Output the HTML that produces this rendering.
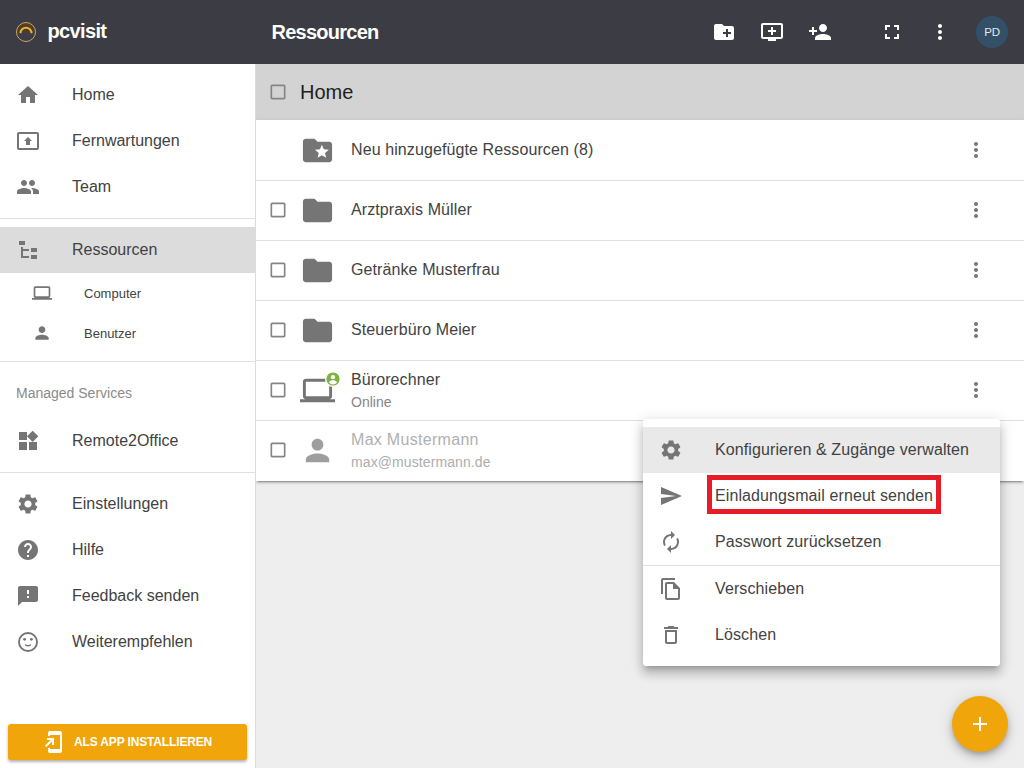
<!DOCTYPE html>
<html lang="de">
<head>
<meta charset="utf-8">
<title>pcvisit – Ressourcen</title>
<style>
*{box-sizing:border-box;margin:0;padding:0}
html,body{width:1024px;height:768px;overflow:hidden;background:#eeeeee;font-family:"Liberation Sans",sans-serif;color:#424242}
.abs{position:absolute}
svg{display:block}
#side{position:absolute;left:0;top:0;width:256px;height:768px;background:#fff;border-right:1px solid #dcdcdc;z-index:2}
#sidehead{position:absolute;left:0;top:0;width:256px;height:64px;background:#3b3c44}
#brand{position:absolute;left:47.500px;top:19px;letter-spacing:-0.65px;font-size:20px;line-height:24px;font-weight:bold;color:#fff;white-space:nowrap}
.nav{position:absolute;left:0;width:255px;height:46px}
.nav svg{position:absolute;left:16px;top:11px;width:24px;height:24px;fill:#757575}
.nav span{position:absolute;left:72px;top:11px;font-size:16px;line-height:24px;color:#424242;white-space:nowrap}
.nav.sel{background:#dcdcdc}
.sub{position:absolute;left:0;width:255px;height:40px}
.sub svg{position:absolute;left:32px;top:10px;width:20px;height:20px;fill:#757575}
.sub span{position:absolute;left:84px;top:11px;font-size:13px;line-height:20px;color:#424242;white-space:nowrap}
.hr{position:absolute;left:0;width:255px;height:1px;background:#e0e0e0}
#ms{position:absolute;left:16px;top:383px;font-size:14px;line-height:20px;color:#8a8a8a;white-space:nowrap}
#install{position:absolute;left:8px;top:724px;width:239px;height:36px;background:#f0a50a;border-radius:3px;box-shadow:0 2px 3px rgba(0,0,0,.3)}
#install svg{position:absolute;left:34px;top:6px;width:24px;height:24px;fill:#fff}
#install span{position:absolute;left:66px;top:9px;letter-spacing:-0.15px;font-size:12px;line-height:18px;font-weight:bold;color:#fff;white-space:nowrap}
#top{position:absolute;left:256px;top:0;width:768px;height:64px;background:#3b3c44}
#title{position:absolute;left:15.500px;top:20px;font-size:20px;letter-spacing:-0.75px;line-height:24px;font-weight:bold;color:#fff;white-space:nowrap}
#top svg{position:absolute;top:20px;width:24px;height:24px;fill:#fff}
#avatar{position:absolute;left:720px;top:16px;width:32px;height:32px;border-radius:50%;background:#345069;color:#e3e9ee;font-size:11.500px;letter-spacing:-0.3px;line-height:33px;text-align:center}
#crumb{position:absolute;left:256px;top:64px;width:768px;height:56px;background:#d3d3d3}
#crumb span{position:absolute;left:44px;top:14px;font-size:20px;line-height:28px;color:#212121}
.cb{position:absolute;left:268px;width:20px;height:20px;fill:#858585}
#list{position:absolute;left:256px;top:120px;width:768px;height:361px;background:#fff;box-shadow:0 3px 1px -2px rgba(0,0,0,.2),0 2px 2px 0 rgba(0,0,0,.14),0 1px 5px 0 rgba(0,0,0,.12)}
.row{position:absolute;left:0;width:768px;height:60px}
.sep{position:absolute;left:0;width:768px;height:1px;background:#e0e0e0}
.row .ic{position:absolute;left:44px;top:13px;width:35px;height:35px;fill:#757575}
.row .t1{position:absolute;left:95px;top:18px;letter-spacing:0.1px;font-size:16px;line-height:24px;color:#424242;white-space:nowrap}
.row .t2{position:absolute;left:95px;top:32px;font-size:14px;line-height:20px;color:#858585;white-space:nowrap}
.row.two .t1{top:8px}
.row .mv{position:absolute;left:708px;top:18px;width:24px;height:24px;fill:#757575}
#menu{position:absolute;left:643px;top:419px;width:357px;height:247px;background:#fff;border-radius:3px;box-shadow:0 5px 5px -3px rgba(0,0,0,.2),0 8px 10px 1px rgba(0,0,0,.14),0 3px 14px 2px rgba(0,0,0,.12)}
.mi{position:absolute;left:0;width:357px;height:46px}
.mi svg{position:absolute;left:16px;top:11px;width:24px;height:24px;fill:#757575}
.mi span{position:absolute;left:72px;top:11px;letter-spacing:0.1px;font-size:16px;line-height:24px;color:#424242;white-space:nowrap}
#fab{position:absolute;left:952px;top:696px;width:56px;height:56px;border-radius:50%;background:#f0a50a;box-shadow:0 3px 5px -1px rgba(0,0,0,.2),0 6px 10px 0 rgba(0,0,0,.14),0 1px 18px 0 rgba(0,0,0,.12)}
#fab svg{position:absolute;left:16px;top:16px;width:24px;height:24px;fill:#fff}
</style>
</head>
<body>
<div id="side">
  <div id="sidehead">
    <svg class="abs" style="left:16px;top:22px" width="20" height="20" viewBox="0 0 20 20"><defs><linearGradient id="lg" x1="0" y1="0" x2="0" y2="1"><stop offset="0" stop-color="#5c3f1e"/><stop offset="0.5" stop-color="#4a3a30"/><stop offset="0.62" stop-color="#3d3c4c"/><stop offset="1" stop-color="#3d3b46"/></linearGradient></defs><circle cx="10" cy="10" r="9.500" fill="url(#lg)" stroke="#c9a564" stroke-width="1"/><path d="M4.500 11.200a5.500 5.500 0 0 1 11 0" fill="none" stroke="#e4b62e" stroke-width="2"/></svg>
    <div id="brand">pcvisit</div>
  </div>
  <div class="nav" style="top:72px"><svg viewBox="0 0 24 24"><path d="M10 20v-6h4v6h5v-8h3L12 3 2 12h3v8z"/></svg><span>Home</span></div>
  <div class="nav" style="top:118px"><svg viewBox="0 0 24 24"><path d="M21 3H3c-1.11 0-2 .89-2 2v14c0 1.11.89 2 2 2h18c1.11 0 2-.89 2-2V5c0-1.11-.89-2-2-2zm0 16.02H3V4.98h18v14.04zM10 12H8l4-4 4 4h-2v4h-4v-4z"/></svg><span>Fernwartungen</span></div>
  <div class="nav" style="top:164px"><svg viewBox="0 0 24 24"><path d="M16 11c1.66 0 2.99-1.34 2.99-3S17.66 5 16 5c-1.66 0-3 1.34-3 3s1.34 3 3 3zm-8 0c1.66 0 2.99-1.34 2.99-3S9.66 5 8 5C6.34 5 5 6.34 5 8s1.34 3 3 3zm0 2c-2.33 0-7 1.17-7 3.500V19h14v-2.500c0-2.330-4.670-3.500-7-3.500zm8 0c-.29 0-.62.02-.97.05 1.160.84 1.970 1.970 1.970 3.450V19h6v-2.500c0-2.330-4.670-3.500-7-3.500z"/></svg><span>Team</span></div>
  <div class="hr" style="top:218px"></div>
  <div class="nav sel" style="top:227px"><svg viewBox="0 0 24 24"><path d="M3 3h6v4H3V3m12 7h6v4h-6v-4m0 7h6v4h-6v-4m-2-4H7v5h6v2H5V9h2v2h6v2z"/></svg><span>Ressourcen</span></div>
  <div class="sub" style="top:273px"><svg viewBox="0 0 24 24"><path d="M20 18c1.1 0 1.990-.9 1.990-2L22 6c0-1.100-.9-2-2-2H4c-1.100 0-2 .9-2 2v10c0 1.100.9 2 2 2H0v2h24v-2h-4zM4 6h16v10H4V6z"/></svg><span>Computer</span></div>
  <div class="sub" style="top:313px"><svg viewBox="0 0 24 24"><path d="M12 12c2.210 0 4-1.790 4-4s-1.790-4-4-4-4 1.790-4 4 1.790 4 4 4zm0 2c-2.670 0-8 1.340-8 4v2h16v-2c0-2.660-5.330-4-8-4z"/></svg><span>Benutzer</span></div>
  <div class="hr" style="top:361px"></div>
  <div id="ms">Managed Services</div>
  <div class="nav" style="top:418px"><svg viewBox="0 0 24 24"><path d="M13 13v8h8v-8h-8zM3 21h8v-8H3v8zM3 3v8h8V3H3zm13.660-1.310L11 7.340 16.660 13l5.660-5.660-5.660-5.650z"/></svg><span>Remote2Office</span></div>
  <div class="hr" style="top:472px"></div>
  <div class="nav" style="top:481px"><svg viewBox="0 0 24 24"><path d="M19.140 12.940c.04-.3.06-.61.06-.94 0-.32-.02-.64-.07-.94l2.030-1.580c.18-.14.23-.41.12-.61l-1.920-3.320c-.12-.22-.37-.29-.59-.22l-2.390.96c-.5-.38-1.030-.7-1.620-.94l-.36-2.540c-.04-.24-.24-.41-.48-.41h-3.840c-.24 0-.43.17-.47.41l-.36 2.540c-.59.24-1.130.57-1.620.94l-2.390-.96c-.22-.08-.47 0-.59.22L2.740 8.870c-.12.21-.08.47.12.61l2.030 1.580c-.05.3-.09.63-.09.94s.02.64.07.94l-2.030 1.580c-.18.14-.23.41-.12.61l1.920 3.320c.12.22.37.29.59.22l2.390-.96c.5.38 1.030.7 1.620.94l.36 2.540c.05.24.24.41.48.41h3.840c.24 0 .44-.17.47-.41l.36-2.540c.59-.24 1.130-.56 1.620-.94l2.390.96c.22.08.47 0 .59-.22l1.920-3.320c.12-.22.07-.47-.12-.61l-2.010-1.580zM12 15.600c-1.980 0-3.600-1.620-3.600-3.600s1.620-3.600 3.600-3.600 3.600 1.620 3.600 3.600-1.620 3.600-3.600 3.600z"/></svg><span>Einstellungen</span></div>
  <div class="nav" style="top:527px"><svg viewBox="0 0 24 24"><path d="M12 2C6.480 2 2 6.480 2 12s4.480 10 10 10 10-4.480 10-10S17.520 2 12 2zm1 17h-2v-2h2v2zm2.070-7.750l-.9.92C13.450 12.900 13 13.500 13 15h-2v-.5c0-1.100.45-2.100 1.170-2.830l1.240-1.260c.37-.36.59-.86.59-1.410 0-1.100-.9-2-2-2s-2 .9-2 2H8c0-2.210 1.790-4 4-4s4 1.790 4 4c0 .88-.36 1.680-.93 2.250z"/></svg><span>Hilfe</span></div>
  <div class="nav" style="top:573px"><svg viewBox="0 0 24 24"><path d="M20 2H4c-1.100 0-1.990.9-1.990 2L2 22l4-4h14c1.100 0 2-.9 2-2V4c0-1.100-.9-2-2-2zm-7 12h-2v-2h2v2zm0-4h-2V6h2v4z"/></svg><span>Feedback senden</span></div>
  <div class="nav" style="top:619px"><svg viewBox="0 0 24 24"><circle cx="12" cy="12" r="9.050" fill="none" stroke="#757575" stroke-width="1.900"/><circle cx="8.600" cy="9.300" r="1.400"/><circle cx="15.400" cy="9.300" r="1.400"/><path d="M9.500 15q2.500 1.700 5 0" fill="none" stroke="#757575" stroke-width="1.500" stroke-linecap="round"/></svg><span>Weiterempfehlen</span></div>
  <div id="install"><svg viewBox="0 0 24 24"><path d="M18 1.010L8 1c-1.100 0-2 .9-2 2v3h2V5h10v14H8v-1H6v3c0 1.100.9 2 2 2h10c1.100 0 2-.9 2-2V3c0-1.100-.9-1.990-2-1.990zM10 15h2V8H5v2h3.590L3 15.590 4.410 17 10 11.410V15z"/></svg><span>ALS APP INSTALLIEREN</span></div>
</div>

<div id="top">
  <div id="title">Ressourcen</div>
  <svg style="left:456px" viewBox="0 0 24 24"><path d="M20 6h-8l-2-2H4c-1.110 0-1.990.89-1.990 2L2 18c0 1.110.89 2 2 2h16c1.110 0 2-.89 2-2V8c0-1.110-.89-2-2-2zm-1 8h-3v3h-2v-3h-3v-2h3V9h2v3h3v2z"/></svg>
  <svg style="left:504px" viewBox="0 0 24 24"><path d="M21 3H3c-1.110 0-2 .89-2 2v12c0 1.100.89 2 2 2h5v2h8v-2h5c1.100 0 1.990-.9 1.990-2L23 5c0-1.110-.9-2-2-2zm0 14H3V5h18v12zm-5-7v2h-3v3h-2v-3H8v-2h3V7h2v3h3z"/></svg>
  <svg style="left:552px" viewBox="0 0 24 24"><path d="M15 12c2.210 0 4-1.790 4-4s-1.790-4-4-4-4 1.790-4 4 1.790 4 4 4zm-9-2V7H4v3H1v2h3v3h2v-3h3v-2H6zm9 4c-2.670 0-8 1.340-8 4v2h16v-2c0-2.660-5.330-4-8-4z"/></svg>
  <svg style="left:624px" viewBox="0 0 24 24"><path d="M7 14H5v5h5v-2H7v-3zm-2-4h2V7h3V5H5v5zm12 7h-3v2h5v-5h-2v3zM14 5v2h3v3h2V5h-5z"/></svg>
  <svg style="left:672px" viewBox="0 0 24 24"><path d="M12 8c1.100 0 2-.9 2-2s-.9-2-2-2-2 .9-2 2 .9 2 2 2zm0 2c-1.100 0-2 .9-2 2s.9 2 2 2 2-.9 2-2-.9-2-2-2zm0 6c-1.100 0-2 .9-2 2s.9 2 2 2 2-.9 2-2-.9-2-2-2z"/></svg>
  <div id="avatar">PD</div>
</div>

<div id="crumb"><span>Home</span></div>
<svg class="cb" style="top:82px" viewBox="0 0 24 24"><path d="M19 5v14H5V5h14m0-2H5c-1.100 0-2 .9-2 2v14c0 1.100.9 2 2 2h14c1.100 0 2-.9 2-2V5c0-1.100-.9-2-2-2z"/></svg>

<div id="list">
  <div class="row" style="top:0"><svg class="ic" viewBox="0 0 24 24"><path d="M20 6h-8l-2-2H4c-1.100 0-1.990.9-1.990 2L2 18c0 1.100.9 2 2 2h16c1.100 0 2-.9 2-2V8c0-1.100-.9-2-2-2zm-2.060 11L15 15.280 12.060 17l.78-3.330-2.590-2.240 3.410-.29L15 8l1.340 3.140 3.410.29-2.590 2.240.78 3.330z"/></svg><div class="t1">Neu hinzugefügte Ressourcen (8)</div><svg class="mv" viewBox="0 0 24 24"><path d="M12 8c1.100 0 2-.9 2-2s-.9-2-2-2-2 .9-2 2 .9 2 2 2zm0 2c-1.100 0-2 .9-2 2s.9 2 2 2 2-.9 2-2-.9-2-2-2zm0 6c-1.100 0-2 .9-2 2s.9 2 2 2 2-.9 2-2-.9-2-2-2z"/></svg></div>
  <div class="row" style="top:60px"><svg class="ic" viewBox="0 0 24 24"><path d="M10 4H4c-1.100 0-1.990.9-1.990 2L2 18c0 1.100.9 2 2 2h16c1.100 0 2-.9 2-2V8c0-1.100-.9-2-2-2h-8l-2-2z"/></svg><div class="t1">Arztpraxis Müller</div><svg class="mv" viewBox="0 0 24 24"><path d="M12 8c1.100 0 2-.9 2-2s-.9-2-2-2-2 .9-2 2 .9 2 2 2zm0 2c-1.100 0-2 .9-2 2s.9 2 2 2 2-.9 2-2-.9-2-2-2zm0 6c-1.100 0-2 .9-2 2s.9 2 2 2 2-.9 2-2-.9-2-2-2z"/></svg></div>
  <div class="row" style="top:120px"><svg class="ic" viewBox="0 0 24 24"><path d="M10 4H4c-1.100 0-1.990.9-1.990 2L2 18c0 1.100.9 2 2 2h16c1.100 0 2-.9 2-2V8c0-1.100-.9-2-2-2h-8l-2-2z"/></svg><div class="t1">Getränke Musterfrau</div><svg class="mv" viewBox="0 0 24 24"><path d="M12 8c1.100 0 2-.9 2-2s-.9-2-2-2-2 .9-2 2 .9 2 2 2zm0 2c-1.100 0-2 .9-2 2s.9 2 2 2 2-.9 2-2-.9-2-2-2zm0 6c-1.100 0-2 .9-2 2s.9 2 2 2 2-.9 2-2-.9-2-2-2z"/></svg></div>
  <div class="row" style="top:180px"><svg class="ic" viewBox="0 0 24 24"><path d="M10 4H4c-1.100 0-1.990.9-1.990 2L2 18c0 1.100.9 2 2 2h16c1.100 0 2-.9 2-2V8c0-1.100-.9-2-2-2h-8l-2-2z"/></svg><div class="t1">Steuerbüro Meier</div><svg class="mv" viewBox="0 0 24 24"><path d="M12 8c1.100 0 2-.9 2-2s-.9-2-2-2-2 .9-2 2 .9 2 2 2zm0 2c-1.100 0-2 .9-2 2s.9 2 2 2 2-.9 2-2-.9-2-2-2zm0 6c-1.100 0-2 .9-2 2s.9 2 2 2 2-.9 2-2-.9-2-2-2z"/></svg></div>
  <div class="row two" style="top:240px"><svg class="ic" viewBox="0 0 24 24"><path d="M20 18c1.100 0 1.990-.9 1.990-2L22 6c0-1.100-.9-2-2-2H4c-1.100 0-2 .9-2 2v10c0 1.100.9 2 2 2H0v2h24v-2h-4zM4 6h16v10H4V6z"/></svg><div class="t1">Bürorechner</div><div class="t2">Online</div><svg class="mv" viewBox="0 0 24 24"><path d="M12 8c1.100 0 2-.9 2-2s-.9-2-2-2-2 .9-2 2 .9 2 2 2zm0 2c-1.100 0-2 .9-2 2s.9 2 2 2 2-.9 2-2-.9-2-2-2zm0 6c-1.100 0-2 .9-2 2s.9 2 2 2 2-.9 2-2-.9-2-2-2z"/></svg></div>
  <div class="row two" style="top:300px"><svg class="ic" style="fill:#9e9e9e" viewBox="0 0 24 24"><path d="M12 12c2.210 0 4-1.790 4-4s-1.790-4-4-4-4 1.790-4 4 1.790 4 4 4zm0 2c-2.670 0-8 1.340-8 4v2h16v-2c0-2.660-5.330-4-8-4z"/></svg><div class="t1" style="color:#b0b0b0;letter-spacing:0.3px">Max Mustermann</div><div class="t2" style="color:#adadad;letter-spacing:0.1px">max@mustermann.de</div></div>
  <div class="sep" style="top:60px"></div><div class="sep" style="top:120px"></div><div class="sep" style="top:180px"></div><div class="sep" style="top:240px"></div><div class="sep" style="top:300px"></div>
</div>
<svg class="cb" style="top:200px" viewBox="0 0 24 24"><path d="M19 5v14H5V5h14m0-2H5c-1.100 0-2 .9-2 2v14c0 1.100.9 2 2 2h14c1.100 0 2-.9 2-2V5c0-1.100-.9-2-2-2z"/></svg>
<svg class="cb" style="top:260px" viewBox="0 0 24 24"><path d="M19 5v14H5V5h14m0-2H5c-1.100 0-2 .9-2 2v14c0 1.100.9 2 2 2h14c1.100 0 2-.9 2-2V5c0-1.100-.9-2-2-2z"/></svg>
<svg class="cb" style="top:320px" viewBox="0 0 24 24"><path d="M19 5v14H5V5h14m0-2H5c-1.100 0-2 .9-2 2v14c0 1.100.9 2 2 2h14c1.100 0 2-.9 2-2V5c0-1.100-.9-2-2-2z"/></svg>
<svg class="cb" style="top:380px" viewBox="0 0 24 24"><path d="M19 5v14H5V5h14m0-2H5c-1.100 0-2 .9-2 2v14c0 1.100.9 2 2 2h14c1.100 0 2-.9 2-2V5c0-1.100-.9-2-2-2z"/></svg>
<svg class="cb" style="top:440px" viewBox="0 0 24 24"><path d="M19 5v14H5V5h14m0-2H5c-1.100 0-2 .9-2 2v14c0 1.100.9 2 2 2h14c1.100 0 2-.9 2-2V5c0-1.100-.9-2-2-2z"/></svg>
<svg class="abs" style="left:325px;top:371px" width="16" height="16" viewBox="0 0 16 16"><circle cx="8" cy="8" r="8" fill="#fff"/><circle cx="8" cy="8" r="6.600" fill="#7cb342"/><circle cx="8" cy="6.200" r="2.100" fill="#fff"/><path d="M3.900 11.600c.7-1.700 2.400-2.300 4.100-2.300s3.400.6 4.100 2.300a5.500 5.500 0 0 1-8.200 0z" fill="#fff"/></svg>

<div id="menu">
  <div class="mi" style="top:8px;background:#e9e9e9"><svg viewBox="0 0 24 24"><path d="M19.140 12.940c.04-.3.06-.61.06-.94 0-.32-.02-.64-.07-.94l2.030-1.580c.18-.14.23-.41.12-.61l-1.920-3.320c-.12-.22-.37-.29-.59-.22l-2.390.96c-.5-.38-1.030-.7-1.620-.94l-.36-2.540c-.04-.24-.24-.41-.48-.41h-3.840c-.24 0-.43.17-.47.41l-.36 2.540c-.59.24-1.130.57-1.620.94l-2.390-.96c-.22-.08-.47 0-.59.22L2.740 8.870c-.12.21-.08.47.12.61l2.030 1.580c-.05.3-.09.63-.09.94s.02.64.07.94l-2.030 1.580c-.18.14-.23.41-.12.61l1.920 3.320c.12.22.37.29.59.22l2.390-.96c.5.38 1.030.7 1.620.94l.36 2.540c.05.24.24.41.48.41h3.840c.24 0 .44-.17.47-.41l.36-2.540c.59-.24 1.130-.56 1.620-.94l2.390.96c.22.08.47 0 .59-.22l1.920-3.320c.12-.22.07-.47-.12-.61l-2.010-1.580zM12 15.600c-1.980 0-3.600-1.620-3.600-3.600s1.620-3.600 3.600-3.600 3.600 1.620 3.600 3.600-1.620 3.600-3.600 3.600z"/></svg><span>Konfigurieren &amp; Zugänge verwalten</span></div>
  <div class="mi" style="top:54px"><svg viewBox="0 0 24 24"><path d="M2.010 21L23 12 2.010 3 2 10l15 2-15 2z"/></svg><span>Einladungsmail erneut senden</span></div>
  <div class="mi" style="top:100px"><svg viewBox="0 0 24 24"><path d="M12 6v3l4-4-4-4v3c-4.420 0-8 3.580-8 8 0 1.570.46 3.030 1.240 4.260L6.700 14.800c-.45-.83-.7-1.790-.7-2.800 0-3.310 2.690-6 6-6zm6.760 1.740L17.300 9.200c.44.84.7 1.790.7 2.800 0 3.310-2.690 6-6 6v-3l-4 4 4 4v-3c4.420 0 8-3.580 8-8 0-1.570-.46-3.030-1.240-4.260z"/></svg><span>Passwort zurücksetzen</span></div>
  <div class="hr" style="top:146px;width:357px"></div>
  <div class="mi" style="top:147px"><svg viewBox="0 0 24 24"><path d="M16 1H4c-1.100 0-2 .9-2 2v14h2V3h12V1zm-1 4H8c-1.100 0-1.990.9-1.990 2L6 21c0 1.100.89 2 1.990 2H19c1.100 0 2-.9 2-2V11l-6-6zM8 21V7h6v5h5v9H8z"/></svg><span>Verschieben</span></div>
  <div class="mi" style="top:193px"><svg viewBox="0 0 24 24"><path d="M6 19c0 1.100.9 2 2 2h8c1.100 0 2-.9 2-2V7H6v12zM8 9h8v10H8V9zm7.500-5l-1-1h-5l-1 1H5v2h14V4z"/></svg><span>Löschen</span></div>
  <div class="abs" style="left:64px;top:56px;width:234px;height:39px;border:5px solid #e81c27"></div>
</div>

<div id="fab"><svg viewBox="0 0 24 24"><path d="M19 13h-6v6h-2v-6H5v-2h6V5h2v6h6v2z"/></svg></div>
</body>
</html>
